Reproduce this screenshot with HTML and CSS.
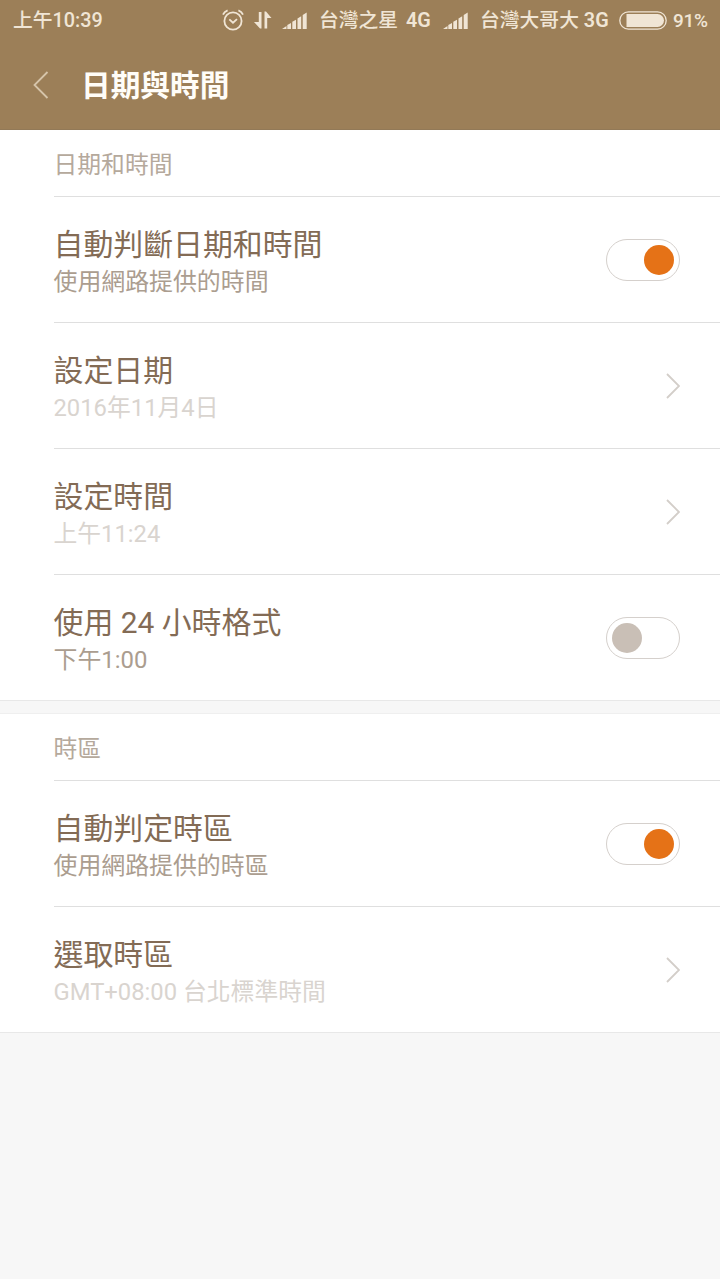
FILE: index.html
```html
<!DOCTYPE html>
<html lang="zh-Hant">
<head>
    <meta charset="UTF-8">
    <meta name="viewport" content="width=device-width, initial-scale=1.0">
    <title>日期與時間</title>
    <link rel="stylesheet" href="styles.css">
</head>
<body>
    <header class="header">
        <div class="status-bar">
            <span class="clock">上午10:39</span>
            <svg class="alarm" width="22" height="22" viewBox="0 0 22 22">
                <circle cx="11" cy="12" r="8.6"/>
                <path d="M7.3 10.3l3.7 3.4 4-3.6M1 5.6Q2.2 2.6 5.6 1.3M21 5.6Q19.8 2.6 16.4 1.3"/>
            </svg>
            <svg class="data" width="18" height="18" viewBox="0 0 18 18">
                <path d="M4.800 1h2.700v16.500H6L0 11h4.800zM10.500 .5h1.500l5.500 6.500H13.200v10.500h-2.700z"/>
            </svg>
            <svg class="signal" width="25" height="17" viewBox="0 0 25 17">
                <path d="M0 17l4.500-3v3zM5.300 17v-4l3.700-2v6zM10.300 17V9.800l3.700-2v9.200zM15.500 17V6.500l3.700-2.200V17zM20.700 17V3l4-2.500V17z"/>
            </svg>
            <span class="carrier carrier-one">台灣之星 <b>4G</b></span>
            <svg class="signal" width="25" height="17" viewBox="0 0 25 17">
                <path d="M0 17l4.500-3v3zM5.300 17v-4l3.700-2v6zM10.300 17V9.800l3.700-2v9.200zM15.500 17V6.500l3.700-2.200V17zM20.700 17V3l4-2.500V17z"/>
            </svg>
            <span class="carrier carrier-two">台灣大哥大 <b>3G</b></span>
            <svg class="battery" width="48" height="19" viewBox="0 0 48 19">
                <rect class="battery-shell" x=".8" y=".8" width="46.400" height="17.400" rx="8.700"/>
                <path d="M7.500 3H38.500a6.500 6.500 0 0 1 0 13H7.500z"/>
            </svg>
            <span class="percent">91%</span>
        </div>
        <div class="title-bar">
            <svg class="back" width="16" height="28" viewBox="0 0 16 28">
                <path d="M14.500 1L1.500 14l13 13"/>
            </svg>
            <h1>日期與時間</h1>
        </div>
    </header>

    <section class="group">
        <h2>日期和時間</h2>
        <div class="row">
            <div class="text">
                <div class="name">自動判斷日期和時間</div>
                <div class="note">使用網路提供的時間</div>
            </div>
            <div class="switch on"></div>
        </div>
        <div class="row">
            <div class="text">
                <div class="name">設定日期</div>
                <div class="note disabled">2016年11月4日</div>
            </div>
            <svg class="arrow" width="15" height="26" viewBox="0 0 15 26"><path d="M2 1L14 13 2 25"/></svg>
        </div>
        <div class="row">
            <div class="text">
                <div class="name">設定時間</div>
                <div class="note disabled">上午11:24</div>
            </div>
            <svg class="arrow" width="15" height="26" viewBox="0 0 15 26"><path d="M2 1L14 13 2 25"/></svg>
        </div>
        <div class="row">
            <div class="text">
                <div class="name">使用 24 小時格式</div>
                <div class="note">下午1:00</div>
            </div>
            <div class="switch"></div>
        </div>
    </section>

    <section class="group">
        <h2>時區</h2>
        <div class="row">
            <div class="text">
                <div class="name">自動判定時區</div>
                <div class="note">使用網路提供的時區</div>
            </div>
            <div class="switch on"></div>
        </div>
        <div class="row">
            <div class="text">
                <div class="name">選取時區</div>
                <div class="note disabled">GMT+08:00 台北標準時間</div>
            </div>
            <svg class="arrow" width="15" height="26" viewBox="0 0 15 26"><path d="M2 1L14 13 2 25"/></svg>
        </div>
    </section>
</body>
</html>
```
FILE: styles.css
```css
* {
    box-sizing: border-box;
}
body {
    margin: 0;
    min-height: 1279px;
    background-color: #f7f7f7;
    font-family: Roboto, "Noto Sans CJK TC", sans-serif;
}
.header {
    height: 130px;
    background-color: #9c7f58;
    border-bottom: 1px solid #927957;
}
.status-bar {
    display: flex;
    align-items: center;
    height: 40px;
    padding-left: 13px;
    color: #f0e5d5;
    fill: #f0e5d5;
    font-size: 19.8px;
    font-weight: 500;
    white-space: nowrap;
}
.status-bar svg {
    flex: none;
}
.status-bar span {
    flex: none;
    padding-top: 2px;
    line-height: 38px;
}
.status-bar b {
    font-weight: 600;
}
.clock {
    width: 209px;
}
.alarm {
    margin-right: 10px;
    fill: none;
    stroke: #f0e5d5;
    stroke-width: 1.8;
}
.data {
    margin-right: 10px;
}
.signal {
    margin-right: 12px;
    margin-top: 1px;
}
.carrier-one {
    width: 124px;
    word-spacing: 3px;
}
.carrier-two {
    width: 139px;
}
.battery {
    margin-right: 6px;
}
.battery-shell {
    fill: none;
    stroke: #f0e5d5;
    stroke-width: 1.3;
}
.percent {
    font-size: 19px;
    letter-spacing: -0.3px;
}
.title-bar {
    display: flex;
    align-items: center;
    height: 90px;
    padding-left: 33px;
}
.back {
    fill: none;
    stroke: #d6c5aa;
    stroke-width: 1.8;
}
h1 {
    margin: 0 0 4px 32px;
    color: #fffdf8;
    font-size: 29.7px;
    font-weight: 700;
}
.group {
    margin-bottom: 14px;
    padding-left: 53.5px;
    background-color: #fff;
    box-shadow: 0 1px 0 #e8e8e8, 0 -1px 0 #efefef;
}
.header + .group {
    box-shadow: 0 1px 0 #e8e8e8;
}
h2 {
    height: 66px;
    margin: 0;
    color: #b5a99c;
    font-size: 23.8px;
    font-weight: 400;
    line-height: 70px;
}
.row {
    display: flex;
    align-items: center;
    justify-content: space-between;
    height: 126px;
    padding-right: 40px;
    border-top: 1px solid #dfdfdf;
}
.text {
    padding-top: 5px;
}
.name {
    color: #836b55;
    font-size: 29.9px;
    line-height: 40px;
}
.note {
    color: #ab9d8f;
    font-size: 23.9px;
    line-height: 34px;
}
.note.disabled {
    color: #d9d4cf;
    font-size: 23.8px;
}
.switch {
    width: 74px;
    height: 42px;
    padding: 5px;
    border: 1px solid #d5d0cc;
    border-radius: 21px;
}
.switch::before {
    content: "";
    display: block;
    width: 30px;
    height: 30px;
    border-radius: 50%;
    background-color: #c9bfb6;
}
.switch.on::before {
    margin-left: auto;
    background-color: #e57217;
}
.arrow {
    fill: none;
    stroke: #d3cec9;
    stroke-width: 1.8;
}
```
